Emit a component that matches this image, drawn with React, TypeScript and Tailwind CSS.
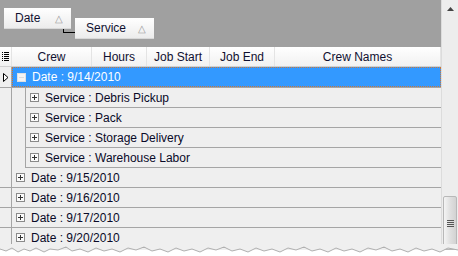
import React from "react"

const cols = [
  { name: "Crew", w: "w-[80px]" },
  { name: "Hours", w: "w-[55px]" },
  { name: "Job Start", w: "w-[63px]" },
  { name: "Job End", w: "w-[65px]" },
  { name: "Crew Names", w: "flex-1" },
]

const services = ["Debris Pickup", "Pack", "Storage Delivery", "Warehouse Labor"]
const dates = ["9/15/2010", "9/16/2010", "9/17/2010", "9/20/2010"]

const edge =
  "L6 7 L12 4 L18 8 L24 5 L30 7 L36 4 L44 8 L50 5 L58 6 L66 3 L72 7 L80 5 L88 8 L96 4 L104 7 L112 5 L120 8 L128 4 L136 6 L144 3 L152 7 L160 5 L168 8 L176 4 L184 7 L192 5 L200 8 L208 4 L216 6 L224 3 L232 7 L240 5 L248 8 L256 4 L264 7 L272 5 L280 8 L288 4 L296 6 L304 3 L312 7 L320 5 L328 8 L336 4 L344 7 L352 5 L360 8 L368 4 L376 6 L384 3 L392 7 L400 5 L408 8 L416 4 L424 7 L432 5 L440 8 L448 4 L458 6"

function ExpandBox({ open, light }: { open?: boolean; light?: boolean }) {
  return (
    <svg width="9" height="9" viewBox="0 0 9 9" className="shrink-0">
      <rect x="0.5" y="0.5" width="8" height="8" fill={light ? "#f4f4f4" : "#fafafa"} stroke={light ? "#e0e0e0" : "#8a8a8a"} />
      <line x1="2" y1="4.5" x2="7" y2="4.5" stroke={light ? "#dcdcdc" : "#333"} />
      {!open && <line x1="4.5" y1="2" x2="4.5" y2="7" stroke="#333" />}
    </svg>
  )
}

function GroupChip({ label, w }: { label: string; w: string }) {
  return (
    <div className={`${w} h-[21px] flex items-center justify-between pl-[11px] pr-[8px] bg-gradient-to-b from-white to-[#ececec] border-b border-[#d8d8d8] text-[12px] text-[#101030]`}>
      <span>{label}</span>
      <span className="text-[10px] text-[#9a9a9a]">△</span>
    </div>
  )
}

export default function App() {
  return (
    <div className="w-[458px] h-[256px] bg-white overflow-hidden relative" style={{ fontFamily: "'Liberation Sans', Arial, sans-serif" }}>
      <div className="flex h-[250px]">
        <div className="w-[441px] flex flex-col">
          {/* group-by panel */}
          <div className="h-[47px] bg-[#a0a0a0] relative shrink-0">
            <div className="absolute left-[4px] top-[8px]">
              <GroupChip label="Date" w="w-[67px]" />
            </div>
            <div className="absolute left-[63px] top-[29px] w-[13px] h-[4px] border-l border-b border-black" />
            <div className="absolute left-[75px] top-[18px]">
              <GroupChip label="Service" w="w-[79px]" />
            </div>
          </div>

          {/* header */}
          <div className="flex h-[20px] bg-gradient-to-b from-white to-[#f1f1f1] border-b border-[#d0d0d0] text-[12px] text-[#101030] shrink-0">
            <div className="w-[12px] flex items-center justify-center border-r border-[#e4e4e4]">
              <svg width="7" height="9" viewBox="0 0 7 9">
                {[0, 2, 4, 6, 8].map((y) => (
                  <g key={y}>
                    <rect x="0" y={y} width="1" height="1" fill="#000" />
                    <rect x="2" y={y} width="5" height="1" fill="#000" />
                  </g>
                ))}
              </svg>
            </div>
            {cols.map((c) => (
              <div key={c.name} className={`${c.w} flex items-center justify-center border-r border-[#e4e4e4]`}>
                {c.name}
              </div>
            ))}
          </div>

          {/* rows */}
          <div className="flex-1 bg-[#efefef] text-[12px] text-[#0a0a28]">
            <div className="flex h-[21px] border-b border-[#a5a5a5]">
              <div className="w-[12px] flex items-center justify-center bg-[#efefef] border-r border-[#a5a5a5]">
                <svg width="6" height="9" viewBox="0 0 6 9">
                  <path d="M0.5 0.5 L5 4.5 L0.5 8.5 Z" fill="#fff" stroke="#000" />
                </svg>
              </div>
              <div className="flex-1 flex items-center gap-[6px] pl-[4px] bg-[#3399ff] text-white border border-dotted border-[#c8773a]">
                <ExpandBox open light />
                <span>Date : 9/14/2010</span>
              </div>
            </div>
            <div className="flex">
              <div className="w-[12px] border-r border-[#a5a5a5]" />
              <div className="w-[14px] border-r border-[#a5a5a5]" />
              <div className="flex-1">
                {services.map((s) => (
                  <div key={s} className="flex h-[20px] items-center gap-[6px] pl-[4px] border-b border-[#a5a5a5]">
                    <ExpandBox />
                    <span>Service : {s}</span>
                  </div>
                ))}
              </div>
            </div>
            {dates.map((d) => (
              <div key={d} className="flex h-[20px] border-b border-[#a5a5a5]">
                <div className="w-[12px] border-r border-[#a5a5a5]" />
                <div className="flex-1 flex items-center gap-[6px] pl-[4px]">
                  <ExpandBox />
                  <span>Date : {d}</span>
                </div>
              </div>
            ))}
          </div>
        </div>

        {/* scrollbar */}
        <div className="w-[17px] bg-[#ededed] border-l border-[#dcdcdc] flex flex-col">
          <div className="h-[16px] flex items-center justify-center mt-[1px]">
            <svg width="7" height="4" viewBox="0 0 7 4">
              <path d="M0 4 L3.5 0 L7 4 Z" fill="#444" />
            </svg>
          </div>
          <div className="flex-1" />
          <div className="h-[54px] mx-[1px] rounded-[2px] border border-[#b8b8b8] bg-gradient-to-r from-[#f4f4f4] via-[#e0e0e0] to-[#d2d2d2] flex items-center justify-center">
            <svg width="7" height="7" viewBox="0 0 7 7">
              {[0, 2, 4, 6].map((y) => (
                <rect key={y} x="0" y={y} width="7" height="1" fill="#555" />
              ))}
            </svg>
          </div>
        </div>
      </div>

      {/* torn edge */}
      <svg className="absolute left-0 top-[244px]" width="458" height="12" viewBox="0 0 458 12">
        <path d={`M0 0 L0 5 ${edge} L458 0 Z`} fill="#efefef" />
        <path d={`M0 5 ${edge}`} fill="none" stroke="#b0b0b0" strokeWidth="1" />
      </svg>
    </div>
  )
}
